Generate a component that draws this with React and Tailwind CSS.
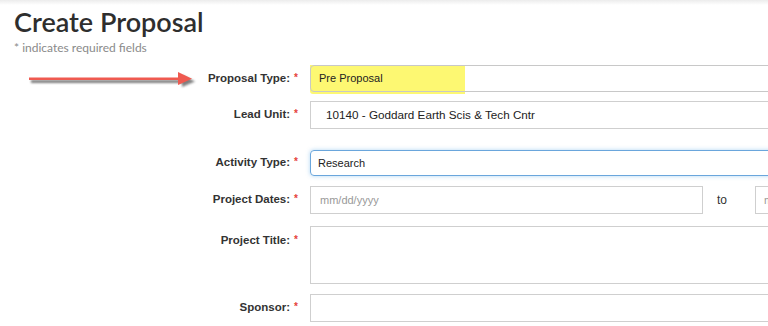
const labelCls =
  "w-[298px] shrink-0 text-right text-[11.5px] font-bold text-[#333] [font-family:'Liberation_Sans',Arial,sans-serif]";

function Label({ children, top }) {
  return (
    <div className={`${labelCls} ${top ? "pt-[6px]" : "self-center"}`}>
      {children}
      <span className="ml-[4px] align-top text-[10px] text-[#e5413a]">*</span>
    </div>
  );
}

function Arrow() {
  return (
    <svg width="200" height="24" viewBox="0 0 200 24" className="absolute left-[22px] top-[67px]">
      <defs>
        <filter id="blur" x="-10%" y="-50%" width="120%" height="200%">
          <feGaussianBlur stdDeviation="1.1" />
        </filter>
      </defs>
      <g filter="url(#blur)" fill="#555" opacity="0.75">
        <rect x="9" y="13" width="158" height="3" />
        <path d="M160 8 L173 14.5 L160 20 Z" />
      </g>
      <rect x="7" y="10.5" width="156" height="2.5" fill="#ef5a50" />
      <path d="M156 5 L170 11.8 L156 18 Z" fill="#ef5a50" />
    </svg>
  );
}

export default function App() {
  return (
    <div className="relative h-[326px] w-[768px] overflow-hidden bg-white [font-family:'Liberation_Sans',Arial,sans-serif]">
      <div className="h-[5px] bg-gradient-to-b from-[#ececec] to-white" />
      <div className="pl-[14px]">
        <h1 className="mt-[1px] text-[27px] font-semibold leading-[32px] text-[#2e2e2e] [font-family:Lato,sans-serif]">
          Create Proposal
        </h1>
        <p className="mt-[3px] text-[12px] leading-[14px] text-[#8a8a8a] [font-family:Lato,sans-serif]">
          * indicates required fields
        </p>
      </div>

      <Arrow />

      <div className="mt-[10px] flex flex-col">
        <div className="flex gap-[12px]">
          <Label>Proposal Type:</Label>
          <div className="relative h-[27px] w-[520px] shrink-0">
            <div className="absolute left-0 top-0 h-[29px] w-[155px] rounded-bl-[3px] bg-[#fdf872]" />
            <div className="relative flex h-[27px] items-center rounded-[4px] border border-[#c8c8c8] pl-[8px] text-[11px] text-[#222]">
              Pre Proposal
            </div>
          </div>
        </div>

        <div className="mt-[9px] flex gap-[12px]">
          <Label>Lead Unit:</Label>
          <div className="flex h-[28px] w-[520px] shrink-0 items-center border border-[#cfcfcf] pl-[15px] text-[11.7px] text-[#222]">
            10140 - Goddard Earth Scis &amp; Tech Cntr
          </div>
        </div>

        <div className="mt-[21px] flex gap-[12px]">
          <Label>Activity Type:</Label>
          <div className="flex h-[26px] w-[520px] shrink-0 items-center rounded-[4px] border border-[#6aa6dc] pl-[7px] text-[11px] text-[#222] shadow-[0_0_4px_rgba(102,175,233,0.5)]">
            Research
          </div>
        </div>

        <div className="mt-[10px] flex gap-[12px]">
          <Label>Project Dates:</Label>
          <div className="flex shrink-0 items-center">
            <div className="flex h-[28px] w-[393px] items-center border border-[#cfcfcf] pl-[9px] text-[11px] text-[#999]">
              mm/dd/yyyy
            </div>
            <span className="ml-[14px] w-[38px] text-[12px] text-[#333]">to</span>
            <div className="flex h-[28px] w-[100px] items-center border border-[#cfcfcf] pl-[8px] text-[11px] text-[#999]">
              mm/dd/yyyy
            </div>
          </div>
        </div>

        <div className="mt-[12px] flex gap-[12px]">
          <Label top>Project Title:</Label>
          <div className="h-[58px] w-[520px] shrink-0 border border-[#cfcfcf]" />
        </div>

        <div className="mt-[10px] flex gap-[12px]">
          <Label>Sponsor:</Label>
          <div className="h-[28px] w-[520px] shrink-0 border border-[#cfcfcf]" />
        </div>
      </div>
    </div>
  );
}
